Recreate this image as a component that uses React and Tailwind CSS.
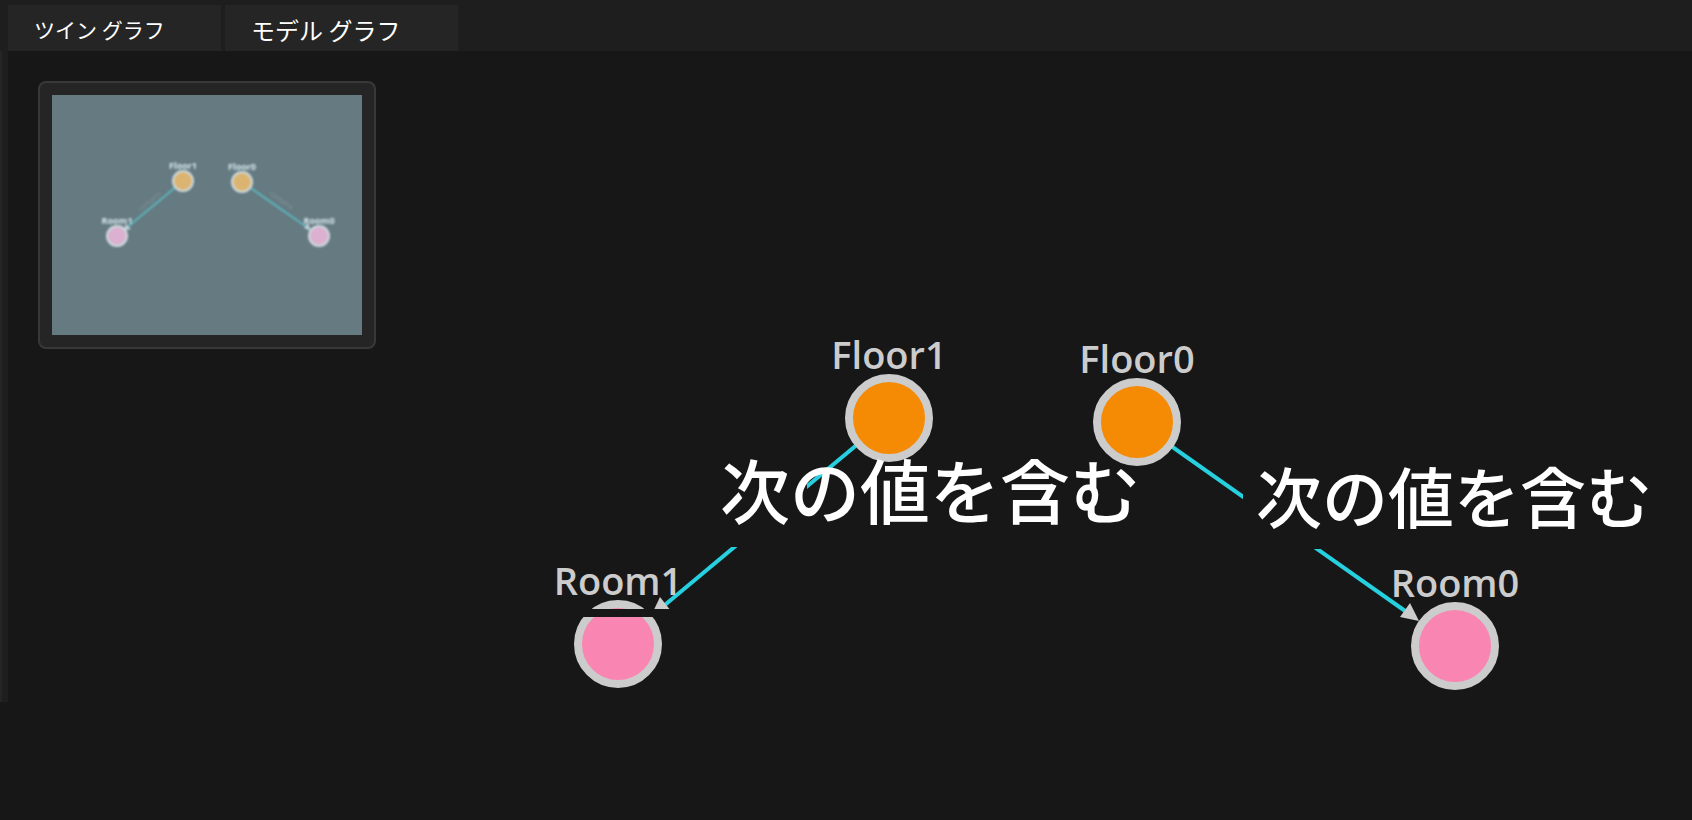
const nodes = [
  { id: 'Floor1', x: 889, y: 418, fill: '#f58a04' },
  { id: 'Floor0', x: 1137, y: 422, fill: '#f58a04' },
  { id: 'Room1', x: 618, y: 644, fill: '#f986b2' },
  { id: 'Room0', x: 1455, y: 646, fill: '#f986b2' },
];

const miniNodes = [
  { id: 'Floor1', x: 131, y: 86, fill: '#dcb472' },
  { id: 'Floor0', x: 190, y: 87, fill: '#dcb472' },
  { id: 'Room1', x: 65, y: 141, fill: '#dbb0d0' },
  { id: 'Room0', x: 267, y: 141, fill: '#dbb0d0' },
];

function MiniMap() {
  return (
    <div className="w-[338px] rounded-lg border-2 border-[#383838] bg-[#252525] p-3">
      <div className="bg-[#657a81]">
        <svg viewBox="0 0 310 240" className="block w-full" role="img" aria-label="Mini map">
          <g className="blur-[1px]">
            <g stroke="#5fb5bd" strokeWidth="2">
              <path d="M131 86 L72 135" />
              <path d="M190 87 L259 135" />
            </g>
            <g fill="#bfd0d6">
              <path d="M71 136 L74 129 L79 134 Z" />
              <path d="M259 136 L252 133 L256 128 Z" />
            </g>
            <g fill="#84979c" fontSize="7" textAnchor="middle" className="font-['Open_Sans',sans-serif]">
              <text transform="translate(99 108) rotate(-40)">contains</text>
              <text transform="translate(228 107) rotate(35)">contains</text>
            </g>
            {miniNodes.map((n) => (
              <g key={n.id}>
                <circle cx={n.x} cy={n.y} r="10" fill={n.fill} stroke="#cfdde1" strokeWidth="2" />
                <text
                  x={n.x}
                  y={n.y - 12}
                  fill="#d6e8ee"
                  fontSize="9"
                  fontWeight="700"
                  textAnchor="middle"
                  className="font-['Open_Sans',sans-serif]"
                >
                  {n.id}
                </text>
              </g>
            ))}
          </g>
        </svg>
      </div>
    </div>
  );
}

function Graph() {
  return (
    <div className="pointer-events-none absolute inset-0">
      <svg className="block h-full w-full" aria-hidden="true">
        <defs>
          <clipPath id="left-edge">
            <path d="M807 400 H900 V500 H807 Z M600 547 H807 V609 H600 Z" />
          </clipPath>
          <clipPath id="right-edge">
            <path d="M1137 400 H1243 V520 H1137 Z M1243 549 H1500 V660 H1243 Z" />
          </clipPath>
        </defs>
        <g clipPath="url(#left-edge)">
          <path d="M889 418 L660 609" stroke="#26d0de" strokeWidth="4" />
          <path d="M651 616 L660 597 L671 611 Z" fill="#cccccc" />
        </g>
        <g clipPath="url(#right-edge)">
          <path d="M1137 422 L1408 613" stroke="#26d0de" strokeWidth="4" />
          <path d="M1419 621 L1400 617 L1410 603 Z" fill="#cccccc" />
        </g>
        {nodes.map((n) => (
          <circle key={n.id} cx={n.x} cy={n.y} r="40" fill={n.fill} stroke="#cccccc" strokeWidth="8" />
        ))}
        <rect x="570" y="609" width="100" height="8" fill="#171717" />
      </svg>
      {nodes.map((n) => (
        <div
          key={n.id}
          className="absolute -translate-x-1/2 -translate-y-1/2 whitespace-nowrap font-['Open_Sans',sans-serif] text-[38px] leading-none font-semibold text-[#cccccc]"
          style={{ left: n.x, top: n.y - 64 }}
        >
          {n.id}
        </div>
      ))}
      <div className="absolute left-[720px] top-[454px] whitespace-nowrap text-[70px] leading-none font-medium">次の値を含む</div>
      <div className="absolute left-[1256px] top-[461px] whitespace-nowrap text-[66px] leading-none font-medium">次の値を含む</div>
    </div>
  );
}

export default function App() {
  return (
    <div className="relative flex min-h-screen flex-col overflow-hidden bg-[#171717] font-['Noto_Sans_CJK_JP',sans-serif] text-white">
      <nav className="flex h-[51px] items-end gap-1 bg-[#1e1e1e] pl-2" role="tablist">
        <button role="tab" aria-selected="true" className="h-[46px] w-[213px] bg-[#252525] pl-[26px] pt-1 text-left text-[21px]">
          ツイン グラフ
        </button>
        <button role="tab" aria-selected="false" className="h-[46px] w-[233px] bg-[#252525] pl-[26px] pt-1 text-left text-2xl">
          モデル グラフ
        </button>
      </nav>
      <main className="flex grow">
        <div className="h-[651px] w-2 border-l-2 border-[#252525] bg-[#1e1e1e]" />
        <div className="pl-[30px] pt-[30px]">
          <MiniMap />
        </div>
        <Graph />
      </main>
    </div>
  );
}
